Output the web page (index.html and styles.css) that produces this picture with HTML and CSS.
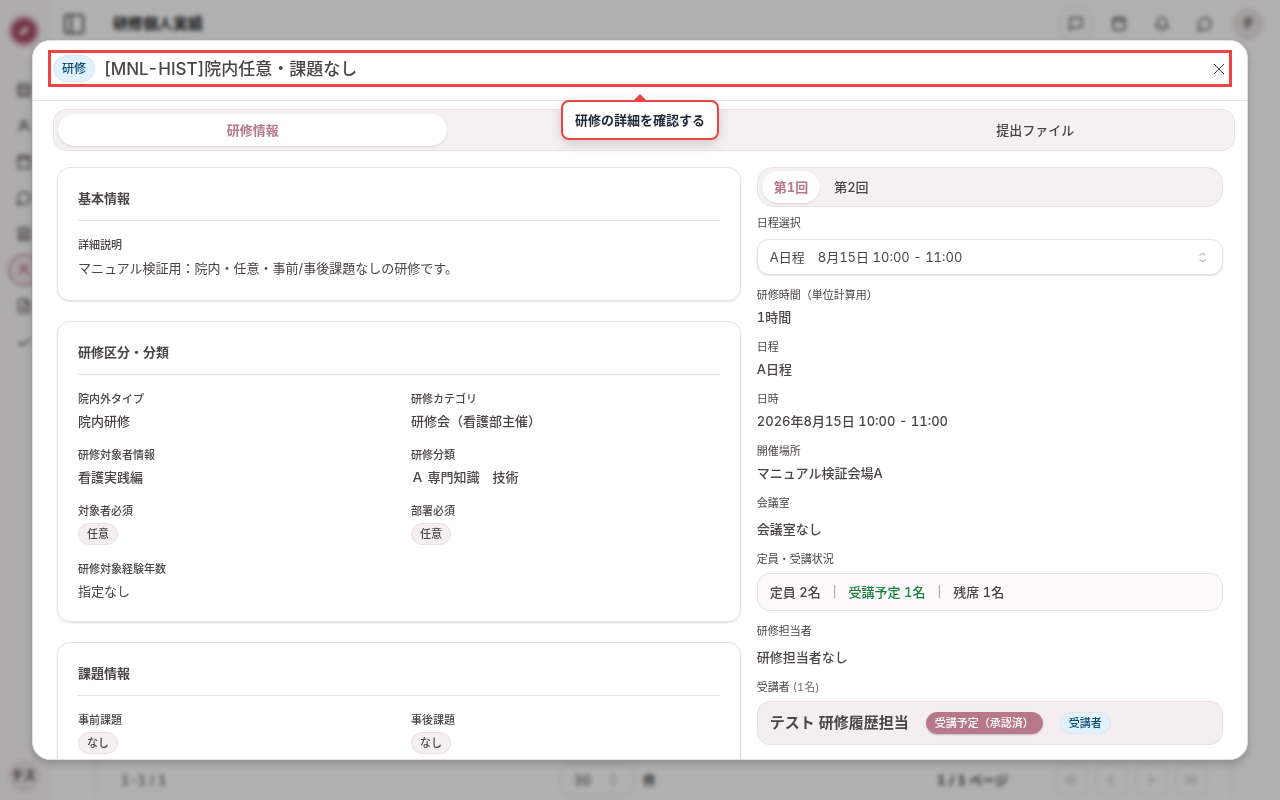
FILE: index.html
```html
<!DOCTYPE html>
<html lang="ja">
<head>
<meta charset="utf-8">
<meta name="viewport" content="width=device-width, initial-scale=1">
<title>研修個人実績</title>
<link rel="stylesheet" href="styles.css">
</head>
<body>
<svg class="sprite" aria-hidden="true">
  <symbol id="i-grid" viewBox="0 0 24 24"><rect x="3" y="3" width="18" height="18" rx="2"/><path d="M3 9h18M9 9v12M14 14h4M14 17h4"/></symbol>
  <symbol id="i-user" viewBox="0 0 24 24"><circle cx="12" cy="8" r="4"/><path d="M5 21c0-5 3-8 7-8s7 3 7 8"/></symbol>
  <symbol id="i-cal" viewBox="0 0 24 24"><rect x="3" y="3" width="18" height="18" rx="3"/><path d="M3 8h18M8 2v4M16 2v4"/></symbol>
  <symbol id="i-chat" viewBox="0 0 24 24"><path d="M7.9 20A9 9 0 1 0 4 16.100L2 22Z"/></symbol>
  <symbol id="i-msg" viewBox="0 0 24 24"><path d="M21 15a2 2 0 0 1-2 2H7l-4 4V5a2 2 0 0 1 2-2h14a2 2 0 0 1 2 2z"/></symbol>
  <symbol id="i-book" viewBox="0 0 24 24"><rect x="4" y="3" width="16" height="18" rx="2"/><path d="M8 8h8M8 12h8M4 16h16"/></symbol>
  <symbol id="i-file" viewBox="0 0 24 24"><path d="M15 2H6a2 2 0 0 0-2 2v16a2 2 0 0 0 2 2h12a2 2 0 0 0 2-2V7zM14 2v6h6M8 13h8M8 17h8"/></symbol>
  <symbol id="i-check" viewBox="0 0 24 24"><path d="M4 12l5 5L21 7"/></symbol>
  <symbol id="i-bell" viewBox="0 0 24 24"><path d="M6 8a6 6 0 0 1 12 0c0 7 3 8 3 9H3c0-1 3-2 3-9M10 21h4"/></symbol>
  <symbol id="i-left" viewBox="0 0 24 24"><path d="M15 6l-6 6 6 6"/></symbol>
  <symbol id="i-right" viewBox="0 0 24 24"><path d="M9 6l6 6-6 6"/></symbol>
  <symbol id="i-first" viewBox="0 0 24 24"><path d="M11 6l-6 6 6 6M19 6l-6 6 6 6"/></symbol>
  <symbol id="i-last" viewBox="0 0 24 24"><path d="M5 6l6 6-6 6M13 6l6 6-6 6"/></symbol>
  <symbol id="i-updown" viewBox="0 0 24 24"><path d="M6 8l6-6 6 6M6 16l6 6 6-6"/></symbol>
</svg>

<div class="app" inert>
  <aside class="sidebar">
    <div class="logo"><svg class="logo-mark" viewBox="0 0 24 24"><path d="M18 6l-3 9-9 3 3-9z"/></svg></div>
    <nav class="nav">
      <svg class="icon"><use href="#i-grid"/></svg>
      <svg class="icon"><use href="#i-user"/></svg>
      <svg class="icon"><use href="#i-cal"/></svg>
      <svg class="icon"><use href="#i-chat"/></svg>
      <svg class="icon"><use href="#i-book"/></svg>
      <span class="nav-active"><svg class="icon"><use href="#i-user"/></svg></span>
      <svg class="icon"><use href="#i-file"/></svg>
      <svg class="icon"><use href="#i-check"/></svg>
    </nav>
    <div class="avatar">テス</div>
  </aside>
  <div class="main">
    <header class="topbar">
      <svg class="icon toggle" viewBox="0 0 24 24"><rect x="2" y="2" width="20" height="20" rx="3"/><path d="M9 2v20"/></svg>
      <span class="page-title">研修個人実績</span>
      <div class="tools">
        <span class="tool tool-boxed"><svg class="icon"><use href="#i-msg"/></svg></span>
        <span class="tool"><svg class="icon"><use href="#i-cal"/></svg></span>
        <span class="tool"><svg class="icon"><use href="#i-bell"/></svg></span>
        <span class="tool"><svg class="icon"><use href="#i-chat"/></svg></span>
        <span class="avatar">テ</span>
      </div>
    </header>
    <div class="list">
      <footer class="pager">
        <span>1-1 / 1</span>
        <span class="page-size"><span class="size-box">30 <svg class="icon icon-small"><use href="#i-updown"/></svg></span><b>件</b></span>
        <b class="page-count">1 / 1 ページ</b>
        <span class="pages">
          <span class="page-btn"><svg class="icon"><use href="#i-first"/></svg></span>
          <span class="page-btn"><svg class="icon"><use href="#i-left"/></svg></span>
          <span class="page-btn"><svg class="icon"><use href="#i-right"/></svg></span>
          <span class="page-btn"><svg class="icon"><use href="#i-last"/></svg></span>
        </span>
      </footer>
    </div>
  </div>
</div>

<div class="overlay">
  <section class="dialog" role="dialog" aria-modal="true" aria-labelledby="dialog-title">
    <header class="dialog-header">
      <div class="spotlight">
        <span class="badge badge-kind">研修</span>
        <h1 class="dialog-title" id="dialog-title">[MNL-HIST]院内任意・課題なし</h1>
        <button class="close" type="button" aria-label="閉じる"><svg viewBox="0 0 12 12"><path d="M1 1l10 10M11 1L1 11"/></svg></button>
        <div class="tip" role="tooltip">研修の詳細を確認する</div>
      </div>
    </header>
    <div class="dialog-body">
      <div class="tabs" role="tablist">
        <button class="tab tab-active" type="button" role="tab" aria-selected="true">研修情報</button>
        <button class="tab" type="button" role="tab" aria-selected="false" aria-label="課題"></button>
        <button class="tab" type="button" role="tab" aria-selected="false">提出ファイル</button>
      </div>
      <div class="columns">
        <div class="cards">
          <section class="card">
            <h2 class="card-title">基本情報</h2>
            <div class="field">
              <div class="label strong">詳細説明</div>
              <p class="description">マニュアル検証用：院内・任意・事前/事後課題なしの研修です。</p>
            </div>
          </section>
          <section class="card">
            <h2 class="card-title">研修区分・分類</h2>
            <div class="fields">
              <div class="field"><div class="label strong">院内外タイプ</div><div class="value">院内研修</div></div>
              <div class="field"><div class="label strong">研修カテゴリ</div><div class="value">研修会（看護部主催）</div></div>
              <div class="field"><div class="label strong">研修対象者情報</div><div class="value">看護実践編</div></div>
              <div class="field"><div class="label strong">研修分類</div><div class="value">Ａ 専門知識　技術</div></div>
              <div class="field"><div class="label strong">対象者必須</div><span class="badge">任意</span></div>
              <div class="field"><div class="label strong">部署必須</div><span class="badge">任意</span></div>
              <div class="field"><div class="label strong">研修対象経験年数</div><div class="value regular">指定なし</div></div>
            </div>
          </section>
          <section class="card">
            <h2 class="card-title">課題情報</h2>
            <div class="fields">
              <div class="field"><div class="label strong">事前課題</div><span class="badge">なし</span></div>
              <div class="field"><div class="label strong">事後課題</div><span class="badge">なし</span></div>
            </div>
          </section>
        </div>
        <aside class="detail">
          <div class="sessions" role="tablist">
            <button class="session tab-active" type="button" role="tab" aria-selected="true">第1回</button>
            <button class="session" type="button" role="tab" aria-selected="false">第2回</button>
          </div>
          <label class="label select-label" for="schedule">日程選択</label>
          <div class="select-wrap">
            <select class="select" id="schedule"><option>A日程　8月15日 10:00 - 11:00</option></select>
            <svg class="select-arrow"><use href="#i-updown"/></svg>
          </div>
          <div class="info">
            <div class="field"><div class="label">研修時間（単位計算用）</div><div class="value">1時間</div></div>
            <div class="field"><div class="label">日程</div><div class="value">A日程</div></div>
            <div class="field"><div class="label">日時</div><div class="value">2026年8月15日 10:00 - 11:00</div></div>
            <div class="field"><div class="label">開催場所</div><div class="value">マニュアル検証会場A</div></div>
            <div class="field field-loose"><div class="label">会議室</div><div class="value">会議室なし</div></div>
            <div class="field field-box">
              <div class="label">定員・受講状況</div>
              <div class="capacity"><span>定員 2名</span><span class="bar">|</span><span class="planned">受講予定 1名</span><span class="bar">|</span><span>残席 1名</span></div>
            </div>
            <div class="field field-loose"><div class="label">研修担当者</div><div class="value">研修担当者なし</div></div>
            <div class="field field-box">
              <div class="label">受講者 <span class="count">(1名)</span></div>
              <div class="attendee"><b class="name">テスト 研修履歴担当</b><span class="badge badge-status">受講予定（承認済）</span><span class="badge badge-info">受講者</span></div>
            </div>
          </div>
        </aside>
      </div>
    </div>
  </section>
</div>
</body>
</html>
```
FILE: styles.css
```css
*, *::before, *::after { box-sizing: border-box; }

body {
  margin: 0;
  height: 100vh;
  overflow: hidden;
  color: #4a4546;
  font: 13px/20px Inter, "Noto Sans CJK JP", sans-serif;
  font-variant-numeric: tabular-nums;
}

h1, h2, p { margin: 0; }
button, select { font: inherit; font-variant-numeric: inherit; color: inherit; }
button { border: 0; background: none; padding: 0; cursor: pointer; }

.sprite { position: absolute; width: 0; height: 0; }
.icon { width: 16px; height: 16px; flex: none; fill: none; stroke: currentColor; stroke-width: 2; }
.icon-small { width: 10px; height: 14px; }

/* Application behind the dialog */
.app { display: flex; height: 100vh; background: #fdfcfd; color: #443f40; }
.sidebar {
  display: flex; flex-direction: column; align-items: center;
  width: 48px; padding: 15px 0 8px; background: #f9f7f8; border-right: 1px solid #f0e6e9;
}
.logo {
  display: grid; place-items: center; width: 32px; height: 32px;
  border-radius: 50%; background: #a8506a; border: 4px solid #dcb5c1;
}
.logo-mark { width: 20px; height: 20px; fill: #e6c6cf; }
.nav { display: flex; flex-direction: column; align-items: center; gap: 20px; margin-top: 35px; }
.nav-active {
  display: grid; place-items: center; width: 32px; height: 32px; margin: -8px 0;
  border: 2px solid #c795a3; border-radius: 50%; background: #f1e6e9; color: #a86278;
}
.avatar {
  display: grid; place-items: center; width: 32px; height: 32px; border-radius: 50%;
  background: #eee2e5; font-size: 12px; font-weight: 600;
}
.sidebar .avatar { margin-top: auto; }
.main { flex: 1; display: flex; flex-direction: column; }
.topbar { display: flex; align-items: center; height: 48px; padding: 0 16px 0 15px; }
.toggle { width: 22px; height: 22px; }
.page-title { margin-left: 28px; font-size: 15px; font-weight: 700; color: #221e1f; }
.tools { display: flex; align-items: center; gap: 11px; margin-left: auto; }
.tool { display: grid; place-items: center; width: 32px; height: 32px; }
.tool-boxed { border: 1px solid #e9dfe2; border-radius: 10px; }
.list {
  flex: 1; display: flex; flex-direction: column; justify-content: flex-end;
  margin: 0 48px 4px 47px; border: 1px solid #eadfe2; border-bottom: 0;
}
.pager { display: grid; grid-template-columns: 440px 320px 1fr auto; align-items: center; padding: 0 24px 0 25px; height: 32px; }
.page-size { display: flex; align-items: center; gap: 8px; }
.size-box {
  display: flex; align-items: center; justify-content: space-between;
  width: 74px; height: 32px; padding: 0 16px 0 12px; border: 1px solid #e6dbde; border-radius: 10px;
}
.page-count { padding-left: 56px; }
.pages { display: flex; gap: 8px; color: #b5adb0; }
.page-btn { display: grid; place-items: center; width: 32px; height: 32px; border: 1px solid #ede6e8; border-radius: 10px; }

/* Dialog */
.overlay {
  position: fixed; inset: 0; display: flex; padding: 40px 32px;
  background: rgba(0, 0, 0, .3); backdrop-filter: blur(2px);
}
.dialog {
  flex: 1; display: flex; flex-direction: column; min-height: 0; overflow: hidden;
  border: 1px solid #e8dfe2; border-radius: 18px; background: #fff;
  box-shadow: 0 4px 8px rgba(0, 0, 0, .2);
}
.dialog-header { flex: none; padding: 9px 15px 13px; border-bottom: 1px solid #ebe2e5; }
.spotlight {
  position: relative; display: flex; align-items: center; gap: 9px;
  height: 37px; padding: 0 4px 0 2px; border: 3px solid #ef4444;
}
.dialog-title { font-size: 17px; line-height: 24px; font-weight: 500; }
.close { display: grid; place-items: center; width: 12px; height: 12px; margin-left: auto; }
.close svg { width: 12px; height: 12px; fill: none; stroke: #4a4546; stroke-width: 1; }
.tip {
  position: absolute; z-index: 1; top: 47px; left: 50%; transform: translateX(-50%);
  padding: 8px 12px; border: 2px solid #ef4444; border-radius: 8px; background: #fff;
  color: #1f2937; font-weight: 700; white-space: nowrap; box-shadow: 0 4px 12px rgba(0, 0, 0, .15);
}
.tip::before {
  content: ""; position: absolute; bottom: 100%; left: 50%; margin-left: -8px;
  border: 8px solid transparent; border-top: 0; border-bottom-color: #ef4444;
}
.badge {
  display: inline-flex; align-items: center; height: 22px; padding: 0 8px;
  border: 1px solid #e9dfe2; border-radius: 11px; background: #f5eff1;
  font-size: 11px; line-height: 16px; font-weight: 500; white-space: nowrap;
}
.badge-kind, .badge-info { border-color: #e2e4ec; background: #e0f2fe; color: #0c4a6e; }
.badge-kind { height: 27px; border-radius: 14px; font-size: 12px; }
.badge-status { border-color: #b8788b; background: #b8788b; color: #fff; box-shadow: 0 1px 2px rgba(0, 0, 0, .2); }

.dialog-body { flex: 1; min-height: 0; padding: 8px 12px 0 20px; overflow: hidden; }
.tabs {
  display: grid; grid-template-columns: repeat(3, 1fr); gap: 2px;
  height: 42px; padding: 4px; border: 1px solid #e9e0e3; border-radius: 13px; background: #f5f1f3;
}
.tab { border-radius: 16px; font-weight: 500; }
.tab-active { background: #fff; color: #b8788b; font-weight: 700; box-shadow: 0 1px 2px rgba(0, 0, 0, .12); }
.columns {
  display: grid; grid-template-columns: minmax(0, 22fr) minmax(0, 15fr);
  gap: 16px; align-items: start; padding: 16px 12px 0 4px;
}
.cards { display: flex; flex-direction: column; gap: 20px; }
.card { padding: 20px; border: 1px solid #e9dfe2; border-radius: 13px; box-shadow: 0 1px 2px rgba(0, 0, 0, .12); }
.card-title { margin-bottom: 16px; padding-bottom: 12px; border-bottom: 1px solid #e9e0e3; font-size: 13px; line-height: 20px; font-weight: 700; }
.fields { display: grid; grid-template-columns: 1fr 1fr; gap: 16px 24px; }
.field { display: flex; flex-direction: column; align-items: flex-start; gap: 4px; }
.label { font-size: 11px; line-height: 16px; }
.strong, .value { font-weight: 500; }
.regular { font-weight: 400; }
.description { line-height: 23px; }

.sessions { display: flex; gap: 2px; height: 40px; padding: 3px 4px; border: 1px solid #e9e0e3; border-radius: 16px; background: #f5f1f3; }
.session { padding: 0 12px; border-radius: 16px; font-weight: 500; }
.session.tab-active { font-weight: 700; }
.select-label { display: block; margin: 8px 0; }
.select-wrap { position: relative; }
.select {
  display: block; width: 100%; height: 36px; padding: 0 12px; appearance: none;
  border: 1px solid #e9dfe2; border-radius: 12px; background: #fff; box-shadow: 0 1px 2px rgba(0, 0, 0, .12);
}
.select-arrow { position: absolute; right: 15px; top: 13px; width: 11px; height: 11px; fill: none; stroke: #8f898b; stroke-width: 2; pointer-events: none; }
.info { display: flex; flex-direction: column; gap: 12px; margin-top: 12px; }
.field-loose { gap: 8px; }
.field-box { gap: 6px; align-items: stretch; }
.capacity {
  display: flex; align-items: center; gap: 12px; height: 38px; padding: 0 12px;
  border: 1px solid #e9dfe2; border-radius: 13px; background: #fcfafb; font-weight: 500;
}
.bar { color: #aaa4a6; font-size: 11px; }
.planned { color: #15803d; }
.count { color: #736d6f; }
.attendee {
  display: flex; align-items: center; gap: 17px; height: 44px; padding: 0 12px;
  border: 1px solid #e9dfe2; border-radius: 13px; background: #f5eef1;
}
.name { font-size: 15px; }
```
